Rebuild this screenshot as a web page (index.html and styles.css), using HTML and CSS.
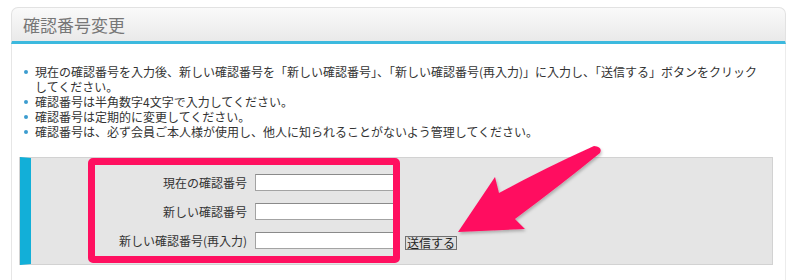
FILE: index.html
```html
<!DOCTYPE html>
<html lang="ja">
<head>
  <meta charset="UTF-8">
  <meta name="viewport" content="width=device-width, initial-scale=1.0">
  <title>確認番号変更</title>
  <link rel="stylesheet" href="styles.css">
</head>
<body>
  <div class="page">
    <div class="panel">
      <div class="panel-head">
        <h2>確認番号変更</h2>
      </div>
      <div class="panel-body">
        <ul class="notes">
          <li>現在の確認番号を入力後、新しい確認番号を「新しい確認番号」、「新しい確認番号(再入力)」に入力し、「送信する」ボタンをクリックしてください。</li>
          <li>確認番号は半角数字4文字で入力してください。</li>
          <li>確認番号は定期的に変更してください。</li>
          <li>確認番号は、必ず会員ご本人様が使用し、他人に知られることがないよう管理してください。</li>
        </ul>

        <div class="form-box">
          <div class="form-grid">
            <label for="cur">現在の確認番号</label>
            <input type="password" id="cur">
            <span></span>

            <label for="new1">新しい確認番号</label>
            <input type="password" id="new1">
            <span></span>

            <label for="new2">新しい確認番号(再入力)</label>
            <input type="password" id="new2">
            <button type="button">送信する</button>
          </div>
          <div class="highlight"></div>
        </div>
      </div>
    </div>

    <svg class="arrow" width="798" height="280" viewBox="0 0 798 280">
      <defs>
        <filter id="sh" x="-10%" y="-10%" width="130%" height="130%">
          <feDropShadow dx="1" dy="2" stdDeviation="1.5" flood-color="#000" flood-opacity="0.25"/>
        </filter>
      </defs>
      <path d="M594 146 Q545 168 499 193 L495 177 L458 232 L525 229 L515 219 Q562 184 600 153 Q603 147 594 146 Z" fill="#ff1060" filter="url(#sh)"/>
    </svg>
  </div>
</body>
</html>
```

FILE: styles.css
```css
body {
  margin: 0;
  background: #fff;
  font-family: "Noto Sans CJK JP", "Noto Sans", sans-serif;
  font-size: 12px;
  color: #333;
}
.page {
  position: relative;
  width: 798px;
  height: 280px;
  padding: 7px 12px 0 11px;
  box-sizing: border-box;
  overflow: hidden;
}
.panel {
  width: 775px;
}
.panel-head {
  height: 37px;
  box-sizing: border-box;
  padding-left: 11px;
  border: 1px solid #e2e2e2;
  border-bottom: 3px solid #3cb9de;
  border-radius: 7px 7px 0 0;
  background: linear-gradient(#fafafa, #e9e9e9);
}
.panel-head h2 {
  margin: 0;
  font-size: 17px;
  font-weight: normal;
  line-height: 34px;
  color: #777;
}
.panel-body {
  height: 240px;
  box-sizing: border-box;
  padding: 20px 0 0;
  border-left: 1px solid #e6e6e6;
  border-right: 1px solid #ececec;
}
.notes {
  list-style: none;
  margin: 0 0 18px;
  padding: 0 16px 0 23px;
}
.notes li {
  position: relative;
  line-height: 15px;
}
.notes li::before {
  content: "";
  position: absolute;
  left: -11px;
  top: 6px;
  width: 4px;
  height: 4px;
  border-radius: 50%;
  background: #3b9ccf;
}
.form-box {
  position: relative;
  margin: 0 12px 0 8px;
  height: 108px;
  box-sizing: border-box;
  padding: 16px 0 0;
  background: #e5e5e5;
  border: 1px solid #d2d2d2;
  border-left: 11px solid #12afd8;
  box-shadow: -1px 0 0 #d2d2d2;
}
.form-grid {
  display: grid;
  grid-template-columns: 216px 140px auto;
  column-gap: 8px;
  row-gap: 12px;
  align-items: center;
}
.form-grid label {
  text-align: right;
  color: #333;
  line-height: 17px;
}
.form-grid input {
  height: 17px;
  box-sizing: border-box;
  margin: 0;
  padding: 0 2px;
  background: #fff;
  border: 1px solid #a3a3a3;
  border-top-color: #8a8a8a;
}
.form-grid button {
  justify-self: start;
  align-self: end;
  margin: 0 0 -1px 2px;
  padding: 0 1px;
  height: 14px;
  font-family: inherit;
  font-size: 12px;
  line-height: 12px;
  color: #222;
  background: #dedede;
  border: 1px solid #707070;
  border-radius: 0;
}
.highlight {
  position: absolute;
  left: 57px;
  top: 0;
  width: 312px;
  height: 105px;
  box-sizing: border-box;
  border: 7px solid #ff1060;
  border-radius: 5px;
}
.arrow {
  position: absolute;
  left: 0;
  top: 0;
  pointer-events: none;
}
```
